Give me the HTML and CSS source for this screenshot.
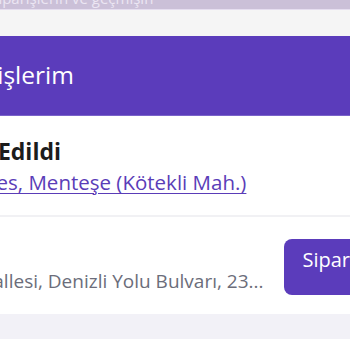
FILE: index.html
```html
<!DOCTYPE html>
<html lang="tr">
<head>
<meta charset="utf-8">
<link rel="stylesheet" href="styles.css">
</head>
<body>
<div class="page">
  <div class="topbar"><span class="top-text">Tüm siparişlerin ve geçmişin</span></div>
  <div class="gap"></div>
  <div class="header"><h1 class="title">Siparişlerim</h1></div>
  <div class="card first">
    <div class="status">Teslim Edildi</div>
    <a class="place" href="#">Kafe Kafes, Menteşe (Kötekli Mah.)</a>
  </div>
  <div class="card second">
    <div class="address">Kötekli Mahallesi, Denizli Yolu Bulvarı, 23...</div>
    <button class="btn">Siparişi Görüntüle</button>
  </div>
  <div class="band"></div>
</div>
</body>
</html>
```
FILE: styles.css
```css
html, body {
  margin: 0;
  padding: 0;
  background: #ffffff;
  overflow: hidden;
}
body {
  font-family: "Open Sans", "Noto Sans", sans-serif;
  width: 350px;
  height: 350px;
}
.page {
  width: 350px;
  overflow: hidden;
}
.topbar {
  height: 9px;
  background: #cbc0d8;
  border-bottom: 1px solid #e6def0;
  overflow: hidden;
}
.top-text {
  display: block;
  color: #ece6f3;
  font-size: 15px;
  line-height: 15px;
  margin-top: -9px;
  margin-left: -44px;
  white-space: nowrap;
}
.gap {
  height: 26px;
  background: #f5f5f5;
}
.header {
  height: 79px;
  background: #5b3cbb;
  border-bottom: 1px solid #7a63c9;
  display: flex;
  align-items: center;
  overflow: hidden;
}
.title {
  margin: 0 0 0 -61px;
  font-size: 24.5px;
  font-weight: 400;
  color: #ffffff;
  white-space: nowrap;
  line-height: 34px;
  padding-bottom: 2px;
}
.card {
  background: #ffffff;
  overflow: hidden;
}
.first {
  height: 101px;
  border-bottom: 2px solid #f1f1f4;
  display: flex;
  flex-direction: column;
  padding-top: 20px;
  box-sizing: border-box;
}
.status {
  font-size: 23px;
  font-weight: 700;
  color: #1c1c1c;
  white-space: nowrap;
  margin-left: -83px;
  line-height: 30px;
}
.place {
  font-size: 20.5px;
  color: #5a3db8;
  text-decoration: underline;
  text-underline-offset: 3px;
  text-decoration-thickness: 1px;
  white-space: nowrap;
  margin-left: -82px;
  line-height: 28px;
  margin-top: 2px;
}
.second {
  height: 97px;
  display: flex;
  align-items: center;
  gap: 20px;
}
.address {
  font-size: 19px;
  color: #6b6d7a;
  white-space: nowrap;
  margin-left: -111px;
  flex: none;
  padding-top: 30px;
}
.btn {
  flex: none;
  height: 56px;
  margin-top: 2px;
  border: none;
  border-radius: 8px;
  background: #5b3cbb;
  color: #ffffff;
  font-family: "Open Sans", "Noto Sans", sans-serif;
  font-size: 20px;
  padding: 0 18px 14px 19px;
  white-space: nowrap;
}
.band {
  height: 25px;
  background: #f2f1f7;
}
```
